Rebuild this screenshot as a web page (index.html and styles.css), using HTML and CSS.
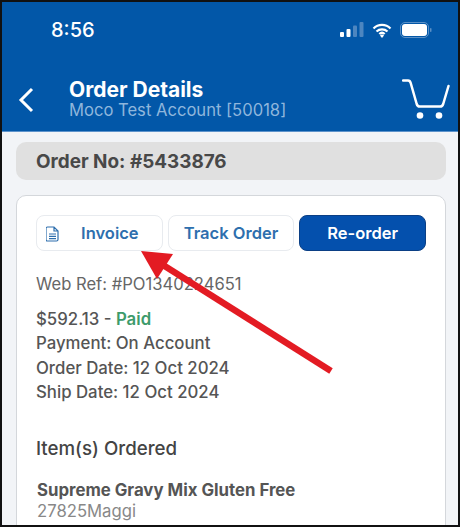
FILE: index.html
```html
<!DOCTYPE html>
<html lang="en">
<head>
    <meta charset="UTF-8">
    <meta name="viewport" content="width=device-width, initial-scale=1.0">
    <title>Order Details</title>
    <link rel="stylesheet" href="styles.css">
</head>
<body>
    <div class="screen">
        <header class="header">
            <div class="status-bar">
                <span class="time">8:56</span>
                <div class="status-icons">
                    <svg width="24" height="16" viewBox="0 0 24 16">
                        <rect x="0" y="10" width="4" height="5" rx="1" fill="#fff"/>
                        <rect x="6.500" y="7" width="4" height="8" rx="1" fill="#fff"/>
                        <rect x="13" y="3.500" width="4" height="11.500" rx="1" fill="#4d86c0"/>
                        <rect x="19.500" y="0" width="4" height="15" rx="1" fill="#4d86c0"/>
                    </svg>
                    <svg width="20" height="15" viewBox="0 0 20 15">
                        <path d="M1.500 5.500a12 12 0 0 1 17 0M4.500 8.500a8 8 0 0 1 11 0M7.300 11a4 4 0 0 1 5.400 0" fill="none" stroke="#fff" stroke-width="2.200"/>
                        <path d="M10 15l-2-2.500a3 3 0 0 1 4 0z" fill="#fff"/>
                    </svg>
                    <svg width="32" height="16" viewBox="0 0 32 16">
                        <rect x="0.500" y="0.500" width="28" height="15" rx="4.500" fill="none" stroke="#5b90c6"/>
                        <rect x="2" y="2" width="25" height="12" rx="3" fill="#fff"/>
                        <rect x="30" y="6" width="1.500" height="4" rx="0.700" fill="#5b90c6"/>
                    </svg>
                </div>
            </div>
            <div class="title-bar">
                <svg class="back" width="16" height="26" viewBox="0 0 16 26">
                    <path d="M14 2L3 13l11 11" fill="none" stroke="#fff" stroke-width="3"/>
                </svg>
                <div class="titles">
                    <div class="title">Order Details</div>
                    <div class="account">Moco Test Account [50018]</div>
                </div>
                <svg class="cart" width="48" height="42" viewBox="0 0 48 42">
                    <path d="M1 1.500h5c1.500 0 2.300 1 2.700 2.500l6 21c.5 1.500 1.500 2.500 3 2.500h20.500c1.500 0 2.500-1 3-2.500L46.500 7" fill="none" stroke="#fff" stroke-width="2.500" stroke-linecap="round"/>
                    <circle cx="18" cy="36.500" r="3.300" fill="#fff"/>
                    <circle cx="37" cy="36.500" r="3.300" fill="#fff"/>
                </svg>
            </div>
        </header>

        <main class="content">
            <div class="order-no">Order No: #5433876</div>
            <section class="card">
                <div class="actions">
                    <button class="btn">
                        <svg class="doc" width="13" height="16" viewBox="0 0 13 16">
                            <path d="M1.500 1h6.500l4 4v8.500a1.500 1.500 0 0 1-1.500 1.500h-9a1.500 1.500 0 0 1-1.500-1.500v-11a1.500 1.500 0 0 1 1.500-1.500zM8 1v4h4M3 8h7M3 10.300h7M3 12.600h7" fill="none" stroke="#2e6fae" stroke-width="1.200"/>
                        </svg>
                        <span class="invoice-label">Invoice</span>
                    </button>
                    <button class="btn">Track Order</button>
                    <button class="btn primary">Re-order</button>
                </div>
                <div class="web-ref">Web Ref: #PO1340224651</div>
                <div class="summary">
                    <div>$592.13 - <span class="paid">Paid</span></div>
                    <div>Payment: On Account</div>
                    <div>Order Date: 12 Oct 2024</div>
                    <div>Ship Date: 12 Oct 2024</div>
                </div>
                <h3 class="items-title">Item(s) Ordered</h3>
                <div class="item-name">Supreme Gravy Mix Gluten Free</div>
                <div class="item-code">27825Maggi</div>
            </section>
        </main>

        <svg class="arrow" width="460" height="527" viewBox="0 0 460 527">
            <path d="M331 371L163 265" stroke="#e31b23" stroke-width="6.500" fill="none"/>
            <polygon points="141,251 173,254 157,279" fill="#e31b23"/>
        </svg>
    </div>
</body>
</html>
```

FILE: styles.css
```css
html, body {
    margin: 0;
    padding: 0;
}
body {
    width: 460px;
    height: 527px;
    overflow: hidden;
    background: #000;
    font-family: Inter, Lato, sans-serif;
}
.screen {
    position: relative;
    box-sizing: border-box;
    width: 460px;
    height: 527px;
    border: 2px solid #111;
    background: #f2f4f7;
    overflow: hidden;
}
.header {
    background: #0257a8;
    height: 130px;
    border-bottom: 1px solid #5d93cb;
    box-sizing: border-box;
    color: white;
}
.status-bar {
    display: flex;
    justify-content: space-between;
    align-items: center;
    padding: 13px 26px 0 49px;
    height: 30px;
}
.time {
    font-size: 20px;
    font-weight: 500;
}
.status-icons {
    display: flex;
    align-items: center;
    gap: 8px;
}
.title-bar {
    display: flex;
    align-items: center;
    padding: 34px 8px 0 16px;
}
.back {
    flex: none;
}
.titles {
    flex: 1;
    margin-left: 35px;
}
.title {
    font-size: 21px;
    font-weight: 700;
    line-height: 21px;
}
.account {
    font-size: 16.600px;
    line-height: 21px;
    color: #8fb6dc;
}
.content {
    padding: 10px 12px 0 14px;
}
.order-no {
    background: #e0e0e0;
    border-radius: 10px;
    height: 38px;
    line-height: 39px;
    padding-left: 20px;
    font-size: 18.900px;
    font-weight: 700;
    color: #484848;
}
.card {
    margin-top: 15px;
    background: white;
    border: 1px solid #d4d7db;
    border-radius: 10px;
    height: 400px;
    box-sizing: border-box;
    padding: 19px 19px 0 19px;
    color: #555;
}
.actions {
    display: flex;
    gap: 5px;
}
.btn {
    position: relative;
    flex: 1 1 0;
    height: 36px;
    padding: 0;
    border: 1px solid #e8ebef;
    border-radius: 8px;
    background: white;
    color: #2e6fae;
    font-family: inherit;
    font-size: 16.500px;
    font-weight: 600;
}
.invoice-label {
    margin-left: 21px;
}
.doc {
    position: absolute;
    left: 9px;
    top: 10px;
}
.primary {
    background: #0450ad;
    border-color: #0b3f85;
    color: white;
}
.web-ref {
    margin-top: 23px;
    font-size: 16.600px;
    line-height: 20px;
    color: #666;
}
.summary {
    margin-top: 13px;
    font-size: 16.800px;
    font-weight: 500;
    line-height: 24.300px;
}
.paid {
    color: #3d9b6b;
    font-weight: 600;
}
.items-title {
    margin: 33px 0 0;
    font-size: 18.700px;
    font-weight: 500;
    line-height: 24px;
    color: #444;
}
.item-name {
    margin: 19px 0 0 1px;
    font-size: 16.800px;
    font-weight: 700;
    line-height: 21px;
}
.item-code {
    margin-left: 1px;
    font-size: 16.700px;
    line-height: 21px;
    color: #888;
}
.arrow {
    position: absolute;
    left: -2px;
    top: -2px;
}
```
